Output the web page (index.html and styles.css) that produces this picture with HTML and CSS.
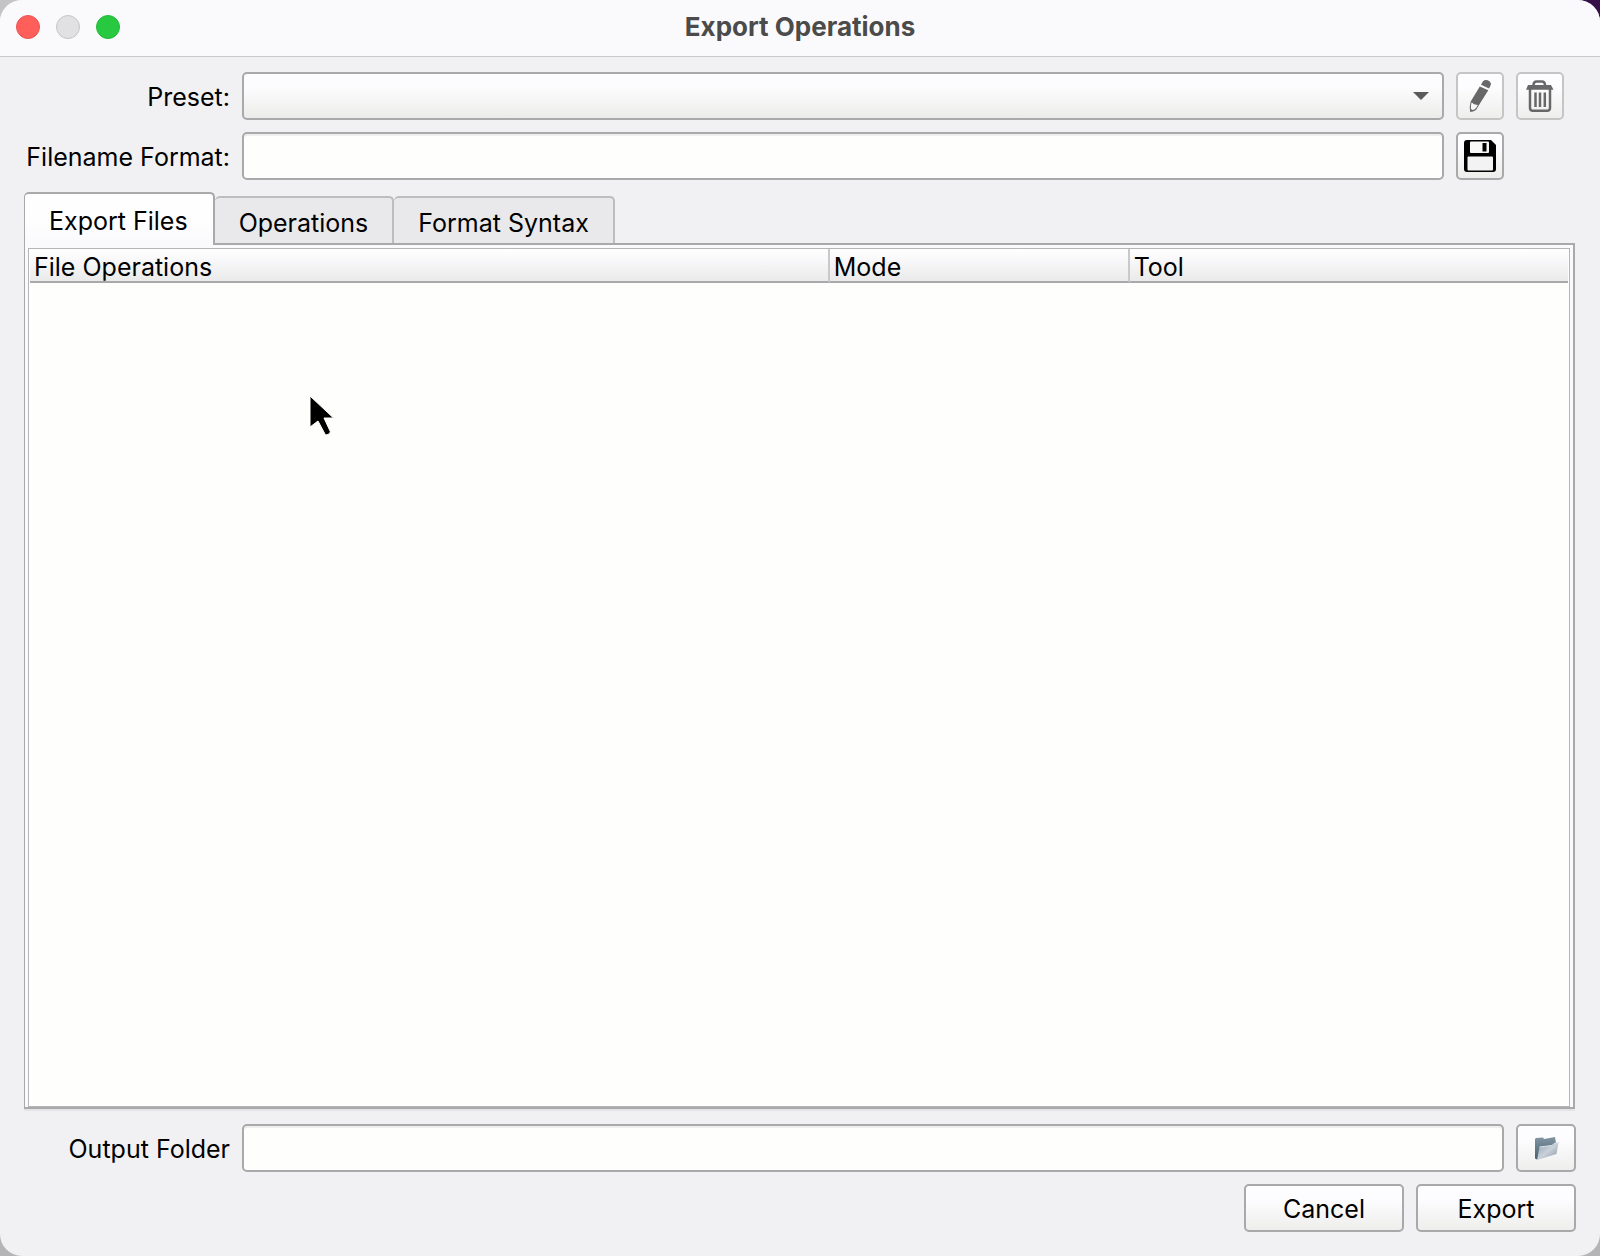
FILE: index.html
```html
<!DOCTYPE html>
<html lang="en">
<head>
    <meta charset="UTF-8">
    <meta name="viewport" content="width=device-width, initial-scale=1.0">
    <title>Export Operations</title>
    <link rel="stylesheet" href="styles.css">
</head>
<body>
    <div class="window">
        <header class="titlebar">
            <div class="lights">
                <button type="button" class="light close" aria-label="Close"></button>
                <button type="button" class="light minimize" aria-label="Minimize" disabled></button>
                <button type="button" class="light maximize" aria-label="Maximize"></button>
            </div>
            <h1>Export Operations</h1>
        </header>

        <form class="content">
            <div class="row">
                <label for="preset">Preset:</label>
                <div class="combo">
                    <select id="preset" class="field"></select>
                    <span class="arrow"></span>
                </div>
                <button type="button" class="button small" aria-label="Edit preset" disabled>
                    <svg width="32" height="32" viewBox="0 0 32 32">
                        <g fill="#686868">
                            <path d="M17 4.800 L18.800 1.500 Q21.500 -1.200 25.500 1.300 Q27.800 3.500 26.500 5.500 L25 8.400 Z"/>
                            <path d="M15.800 6.500 L24.300 10.300 L15 25 L12 30 Q9 32 6.200 32 Q5 27 6.700 21.500 Z"/>
                        </g>
                        <path d="M7.600 22.300 L10 24.300 L13.800 25 L12 28 Q10.500 29.800 8.500 30 L7 29 Q6.700 25.500 7.600 22.300 Z" fill="#fafafa"/>
                    </svg>
                </button>
                <button type="button" class="button small" aria-label="Delete preset" disabled>
                    <svg width="32" height="32" viewBox="0 0 32 32" fill="none" stroke="#686868">
                        <path d="M9.500 6 V4.500 Q10 1.500 12.500 1.500 H18 Q20.500 1.500 21 4.500 V6" stroke-width="2.500"/>
                        <path d="M4 5 H27 L29.500 9.800 H2 Z" fill="#686868" stroke="none"/>
                        <path d="M6 9 V28 Q6 30.800 9 30.800 H23 Q26 30.800 26 28 V9" stroke-width="2.500"/>
                        <path d="M11.500 12.500 V27 M16 12.500 V27 M20.800 12.500 V27" stroke-width="2.500"/>
                    </svg>
                </button>
            </div>
            <div class="row">
                <label for="filename">Filename Format:</label>
                <input type="text" id="filename" class="field">
                <button type="button" class="button small" aria-label="Save preset">
                    <svg width="32" height="32" viewBox="0 0 32 32">
                        <path d="M3 0 H27 L32 5 V29 Q32 32 29 32 H3 Q0 32 0 29 V3 Q0 0 3 0 Z"/>
                        <rect x="6" y="1.500" width="19" height="11.500" rx="1" fill="#f8f8f8"/>
                        <rect x="18.500" y="3" width="4" height="8.500"/>
                        <rect x="3.500" y="16.500" width="25.500" height="14" rx="1" fill="#f3f3f3"/>
                    </svg>
                </button>
            </div>

            <div class="tabs" role="tablist">
                <button type="button" class="tab active" role="tab" aria-selected="true">Export Files</button>
                <button type="button" class="tab" role="tab" aria-selected="false">Operations</button>
                <button type="button" class="tab" role="tab" aria-selected="false">Format Syntax</button>
            </div>
            <div class="pane" role="tabpanel">
                <div class="list">
                    <table>
                        <colgroup>
                            <col class="col-files">
                            <col class="col-mode">
                            <col>
                        </colgroup>
                        <thead>
                            <tr>
                                <th>File Operations</th>
                                <th>Mode</th>
                                <th>Tool</th>
                            </tr>
                        </thead>
                        <tbody></tbody>
                    </table>
                </div>
            </div>

            <div class="row">
                <label for="output">Output Folder</label>
                <input type="text" id="output" class="field wide">
                <button type="button" class="button" aria-label="Choose output folder">
                    <svg width="26" height="26" viewBox="0 0 26 26">
                        <defs>
                            <linearGradient id="folder-back" x1="0" y1="0" x2="0" y2="1">
                                <stop offset="0" stop-color="#8295a3"/>
                                <stop offset="1" stop-color="#48606f"/>
                            </linearGradient>
                            <linearGradient id="folder-front" x1="0" y1="0" x2="1" y2="1">
                                <stop offset="0" stop-color="#8fa1b0"/>
                                <stop offset="0.500" stop-color="#c9d0d8"/>
                                <stop offset="1" stop-color="#8496a5"/>
                            </linearGradient>
                        </defs>
                        <path d="M2 4 L3 3 L10 2.500 L11 4 L22 2 L23 8 L22 18 L4 24.500 L2 23.500 Z" fill="url(#folder-back)"/>
                        <path d="M6.500 12 L19 10.500 L21 8.500 L25.500 7.500 L23.500 19 L4 25 Z" fill="url(#folder-front)"/>
                        <path d="M6.500 12 L19 10.500 L21 8.500 L25.500 7.500" fill="none" stroke="#dde3e8" stroke-width="1"/>
                    </svg>
                </button>
            </div>
            <div class="actions">
                <button type="button" class="button">Cancel</button>
                <button type="submit" class="button">Export</button>
            </div>
        </form>
    </div>

    <svg class="pointer" width="26" height="42" viewBox="0 0 26 42">
        <path d="M1 1 L24.500 23 H15 L21.500 37 Q19.500 40.500 16.500 40 L9 26 L1 32 Z"/>
    </svg>
</body>
</html>
```

FILE: styles.css
```css
* {
    box-sizing: border-box;
}

body {
    margin: 0;
    background: linear-gradient(to right, #c4c4c6 50%, #351048 50%) top / 100% 50% no-repeat, #b4b4b6;
    color: #000;
    font-family: Inter, "Liberation Sans", sans-serif;
    font-size: 25px;
    line-height: 32px;
}

button, input, select {
    font: inherit;
    color: inherit;
}

.window {
    display: flex;
    flex-direction: column;
    min-height: 100vh;
    background-color: #f1f1f4;
    border-radius: 22px;
    overflow: hidden;
}

.titlebar {
    display: grid;
    grid-template-columns: 1fr auto 1fr;
    align-items: center;
    height: 57px;
    padding: 0 16px 2px;
    background-color: #fafafc;
    border-bottom: 1px solid #c9c9cb;
}

.titlebar h1 {
    margin: 0;
    font-size: 26px;
    font-weight: 700;
    color: #4b4b4b;
}

.lights {
    display: flex;
    gap: 16px;
}

.light {
    width: 24px;
    height: 24px;
    padding: 0;
    border: 1px solid;
    border-radius: 50%;
}

.close {
    background-color: #ff5f5b;
    border-color: #e95553;
}

.minimize {
    background-color: #e1e1e3;
    border-color: #c5c5c5;
}

.maximize {
    background-color: #28c940;
    border-color: #24b93a;
}

.content {
    display: flex;
    flex-direction: column;
    flex: 1;
    padding: 15px 24px 24px;
}

.row {
    display: grid;
    grid-template-columns: 206px 1fr 48px 60px;
    gap: 12px;
    align-items: center;
    margin-bottom: 12px;
}

.row label {
    padding-top: 2px;
    text-align: right;
    white-space: nowrap;
}

.field {
    display: block;
    width: 100%;
    height: 48px;
    padding: 0 12px;
    border: 2px solid #a9a9ab;
    border-radius: 5px;
    background-color: #fefefc;
    box-shadow: inset 0 2px #efefed;
}

.wide {
    grid-column: span 2;
}

.combo {
    position: relative;
}

select.field {
    appearance: none;
    background: linear-gradient(#fcfcfe 30%, #ececea);
    box-shadow: none;
}

.arrow {
    position: absolute;
    top: 20px;
    right: 15px;
    border: 8px solid transparent;
    border-top-color: #5b5b5b;
    border-bottom: 0;
    pointer-events: none;
}

.button {
    display: flex;
    align-items: center;
    justify-content: center;
    height: 48px;
    padding: 0;
    border: 2px solid #a9a9ab;
    border-radius: 5px;
    background: linear-gradient(#fdfdff 30%, #eeeeec);
}

.button:disabled {
    border-color: #c5c5c5;
}

.small {
    width: 48px;
}

.tabs {
    display: flex;
    align-items: flex-end;
}

.tab {
    height: 47px;
    padding: 4px 24px 0;
    border: 2px solid #bdbdbd;
    border-left-width: 0;
    border-bottom: 0;
    border-radius: 5px 5px 0 0;
    background-color: #e9e9eb;
}

/* the selected tab covers the top border of the pane */
.tab.active {
    position: relative;
    height: 53px;
    margin-bottom: -2px;
    padding: 2px 25px 0 24px;
    border-color: #a9a9ab;
    border-left-width: 1px;
    background: linear-gradient(#fefefe 50%, #fafafd);
}

.pane {
    display: flex;
    flex: 1;
    margin: 0 1px 15px 0;
    padding: 3px 3px 0;
    border: 2px solid #a9a9ab;
    border-left-width: 1px;
    background-color: #fafafd;
    box-shadow: 0 2px #e4e4e6;
}

.list {
    flex: 1;
    padding: 0 1px;
    border: 1px solid #b5b5b7;
    background-color: #fefefc;
}

table {
    width: 100%;
    table-layout: fixed;
    border-collapse: separate;
    border-spacing: 0;
}

.col-files {
    width: 52%;
}

.col-mode {
    width: 19.5%;
}

th {
    height: 34px;
    padding: 4px 4px 0;
    border-right: 2px solid #c9c9cb;
    border-bottom: 2px solid #a9a9ab;
    background: linear-gradient(#fff, #f8f8fa 35%, #eaeaea);
    font-weight: 400;
    line-height: 28px;
    text-align: left;
}

th:last-child {
    border-right: 0;
}

.actions {
    display: flex;
    justify-content: flex-end;
    gap: 12px;
}

.actions .button {
    width: 160px;
    padding-top: 2px;
}

.pointer {
    position: absolute;
    top: 395px;
    left: 309px;
    stroke: #fff;
    stroke-width: 1;
    pointer-events: none;
}
```
